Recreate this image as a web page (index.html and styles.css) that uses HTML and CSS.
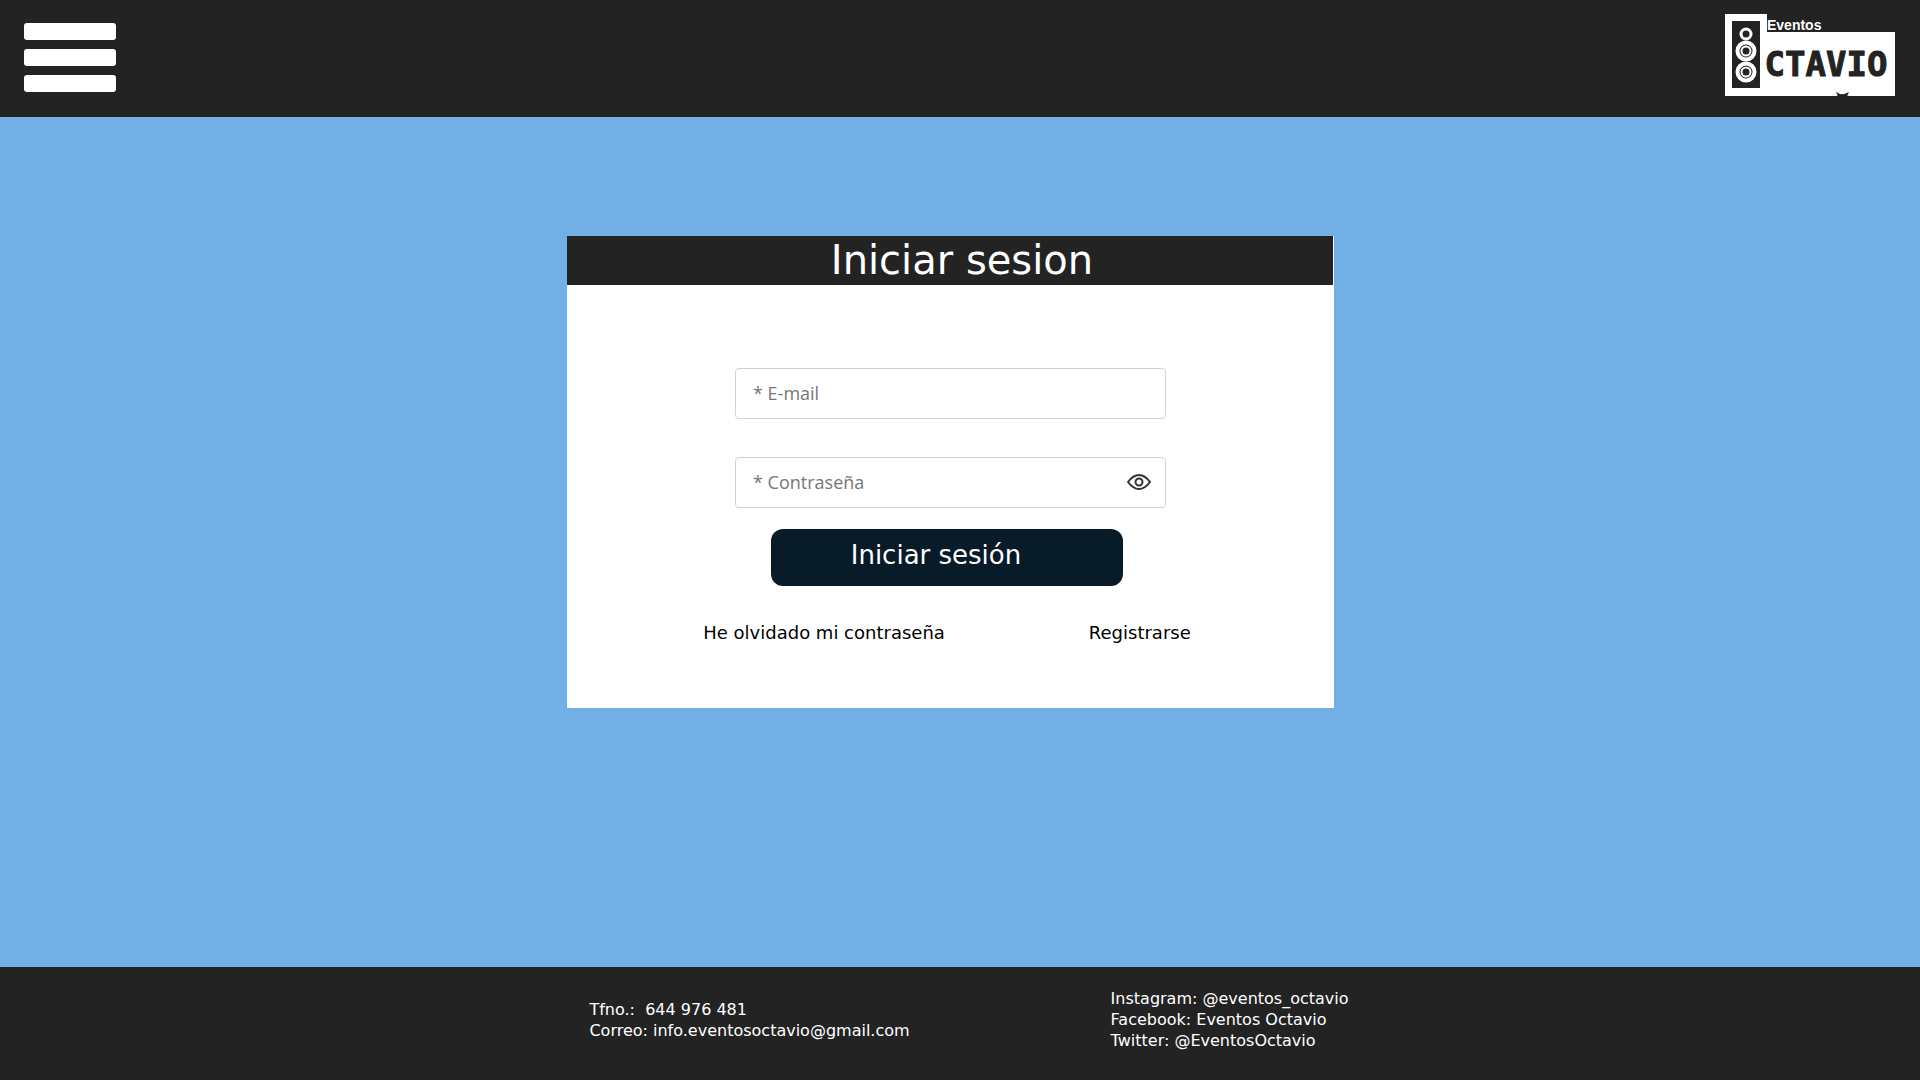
FILE: index.html
```html
<!DOCTYPE html>
<html lang="es">
<head>
<meta charset="utf-8">
<meta name="viewport" content="width=device-width, initial-scale=1">
<title>Eventos Octavio - Iniciar sesión</title>
<link rel="stylesheet" href="styles.css">
</head>
<body>
<header class="site-header">
  <button class="menu" type="button" aria-label="Menú">
    <span class="menu-bar"></span>
    <span class="menu-bar"></span>
    <span class="menu-bar"></span>
  </button>
  <a class="logo" href="#" aria-label="Eventos Octavio">
    <svg width="172" height="84" viewBox="0 0 172 84">
      <path fill="#fff" d="M1 1H43V19H171V83H125L118 81 112 83H1Z"/>
      <rect x="8" y="8" width="28" height="67" fill="#232323"/>
      <g fill="none" stroke="#fff">
        <circle cx="22" cy="21" r="5" stroke-width="3"/>
        <circle cx="22" cy="38" r="8.5" stroke-width="4"/>
        <circle cx="22" cy="38" r="4.5" stroke-width="2"/>
        <circle cx="22" cy="59" r="8.5" stroke-width="4"/>
        <circle cx="22" cy="59" r="4.5" stroke-width="2"/>
      </g>
      <path fill="#232323" d="M112 79L118 82 125 79 123 83H114Z"/>
      <text class="logo-small" x="43" y="17">Eventos</text>
      <text class="logo-big" x="102" y="63" text-anchor="middle">CTAVIO</text>
    </svg>
  </a>
</header>

<main class="page">
  <section class="card">
    <h1 class="card-title">Iniciar sesion</h1>
    <form class="login">
      <input class="field" type="email" placeholder="* E-mail" aria-label="E-mail">
      <div class="password">
        <input class="field" type="password" placeholder="* Contraseña" aria-label="Contraseña">
        <button class="reveal" type="button" aria-label="Mostrar contraseña">
          <svg width="24" height="16" viewBox="0 0 24 16" fill="none" stroke="#333" stroke-width="2">
            <path d="M1 8C4 4 8 1 12 1S20 4 23 8C20 12 16 15 12 15S4 12 1 8Z" stroke-linejoin="round"/>
            <circle cx="12" cy="8" r="3.5"/>
          </svg>
        </button>
      </div>
      <button class="submit" type="submit">Iniciar sesión</button>
    </form>
    <nav class="links">
      <a href="#">He olvidado mi contraseña</a>
      <a href="#">Registrarse</a>
    </nav>
  </section>
</main>

<footer class="site-footer">
  <address class="contact">Tfno.:&nbsp; 644 976 481<br>Correo: info.eventosoctavio@gmail.com</address>
  <div class="social">Instagram: @eventos_octavio<br>Facebook: Eventos Octavio<br>Twitter: @EventosOctavio</div>
</footer>
</body>
</html>
```
FILE: styles.css
```css
* {
  box-sizing: border-box;
}

body {
  margin: 0;
  min-height: 100vh;
  display: flex;
  flex-direction: column;
  background: #73afe7;
  font-family: Verdana, "DejaVu Sans", sans-serif;
}

button {
  border: 0;
  padding: 0;
  background: none;
  font-family: inherit;
  cursor: pointer;
}

.site-header {
  display: flex;
  justify-content: space-between;
  align-items: flex-start;
  padding: 13px 24px 20px;
  background: #232323;
}

.menu {
  display: flex;
  flex-direction: column;
  gap: 9px;
  padding-top: 10px;
}

.menu-bar {
  width: 92px;
  height: 17px;
  border-radius: 3px;
  background: #fff;
}

.logo svg {
  display: block;
}

.logo-small {
  fill: #fff;
  font: bold 14px "Liberation Sans", sans-serif;
}

.logo-big {
  fill: #232323;
  stroke: #232323;
  stroke-width: 1px;
  font: bold 34px "DejaVu Sans Mono", monospace;
}

.page {
  flex: 1;
  display: flex;
  justify-content: center;
  align-items: flex-start;
  padding: 119px 19px 24px 0;
}

.card {
  width: 767px;
  max-width: 100%;
  padding-bottom: 64px;
  background: #fff;
}

.card-title {
  margin: 0 1px 0 0;
  padding-left: 24px;
  background: #232323;
  color: #fff;
  font-size: 40px;
  font-weight: 400;
  line-height: 49px;
  text-align: center;
}

.login {
  display: flex;
  flex-direction: column;
  align-items: center;
  padding-top: 83px;
}

.field {
  display: block;
  width: 431px;
  max-width: 100%;
  height: 51px;
  padding: 0 17px 2px;
  border: 1px solid #d2d2d2;
  border-radius: 4px;
  background: #fff;
  color: #333;
  font-family: "Open Sans", sans-serif;
  font-size: 18px;
}

.field::placeholder {
  color: #777;
  opacity: 1;
}

.password {
  position: relative;
  margin: 38px 0 21px;
}

.reveal {
  position: absolute;
  top: 17px;
  right: 15px;
}

.reveal svg {
  display: block;
}

.submit {
  width: 352px;
  max-width: 100%;
  height: 57px;
  margin-right: 7px;
  padding: 0 22px 6px 0;
  border-radius: 12px;
  background: #081b29;
  color: #fff;
  font-size: 26px;
}

.links {
  display: flex;
  justify-content: center;
  gap: 144px;
  padding: 36px 7px 0 0;
  font-size: 18px;
  line-height: 22px;
}

.links a {
  color: #000;
  text-decoration: none;
}

.site-footer {
  display: flex;
  justify-content: center;
  align-items: center;
  gap: 201px;
  min-height: 113px;
  padding: 0 0 8px 18px;
  background: #232323;
  color: #fff;
  font-size: 16px;
  line-height: 21px;
}

.contact {
  font-style: normal;
}
```
